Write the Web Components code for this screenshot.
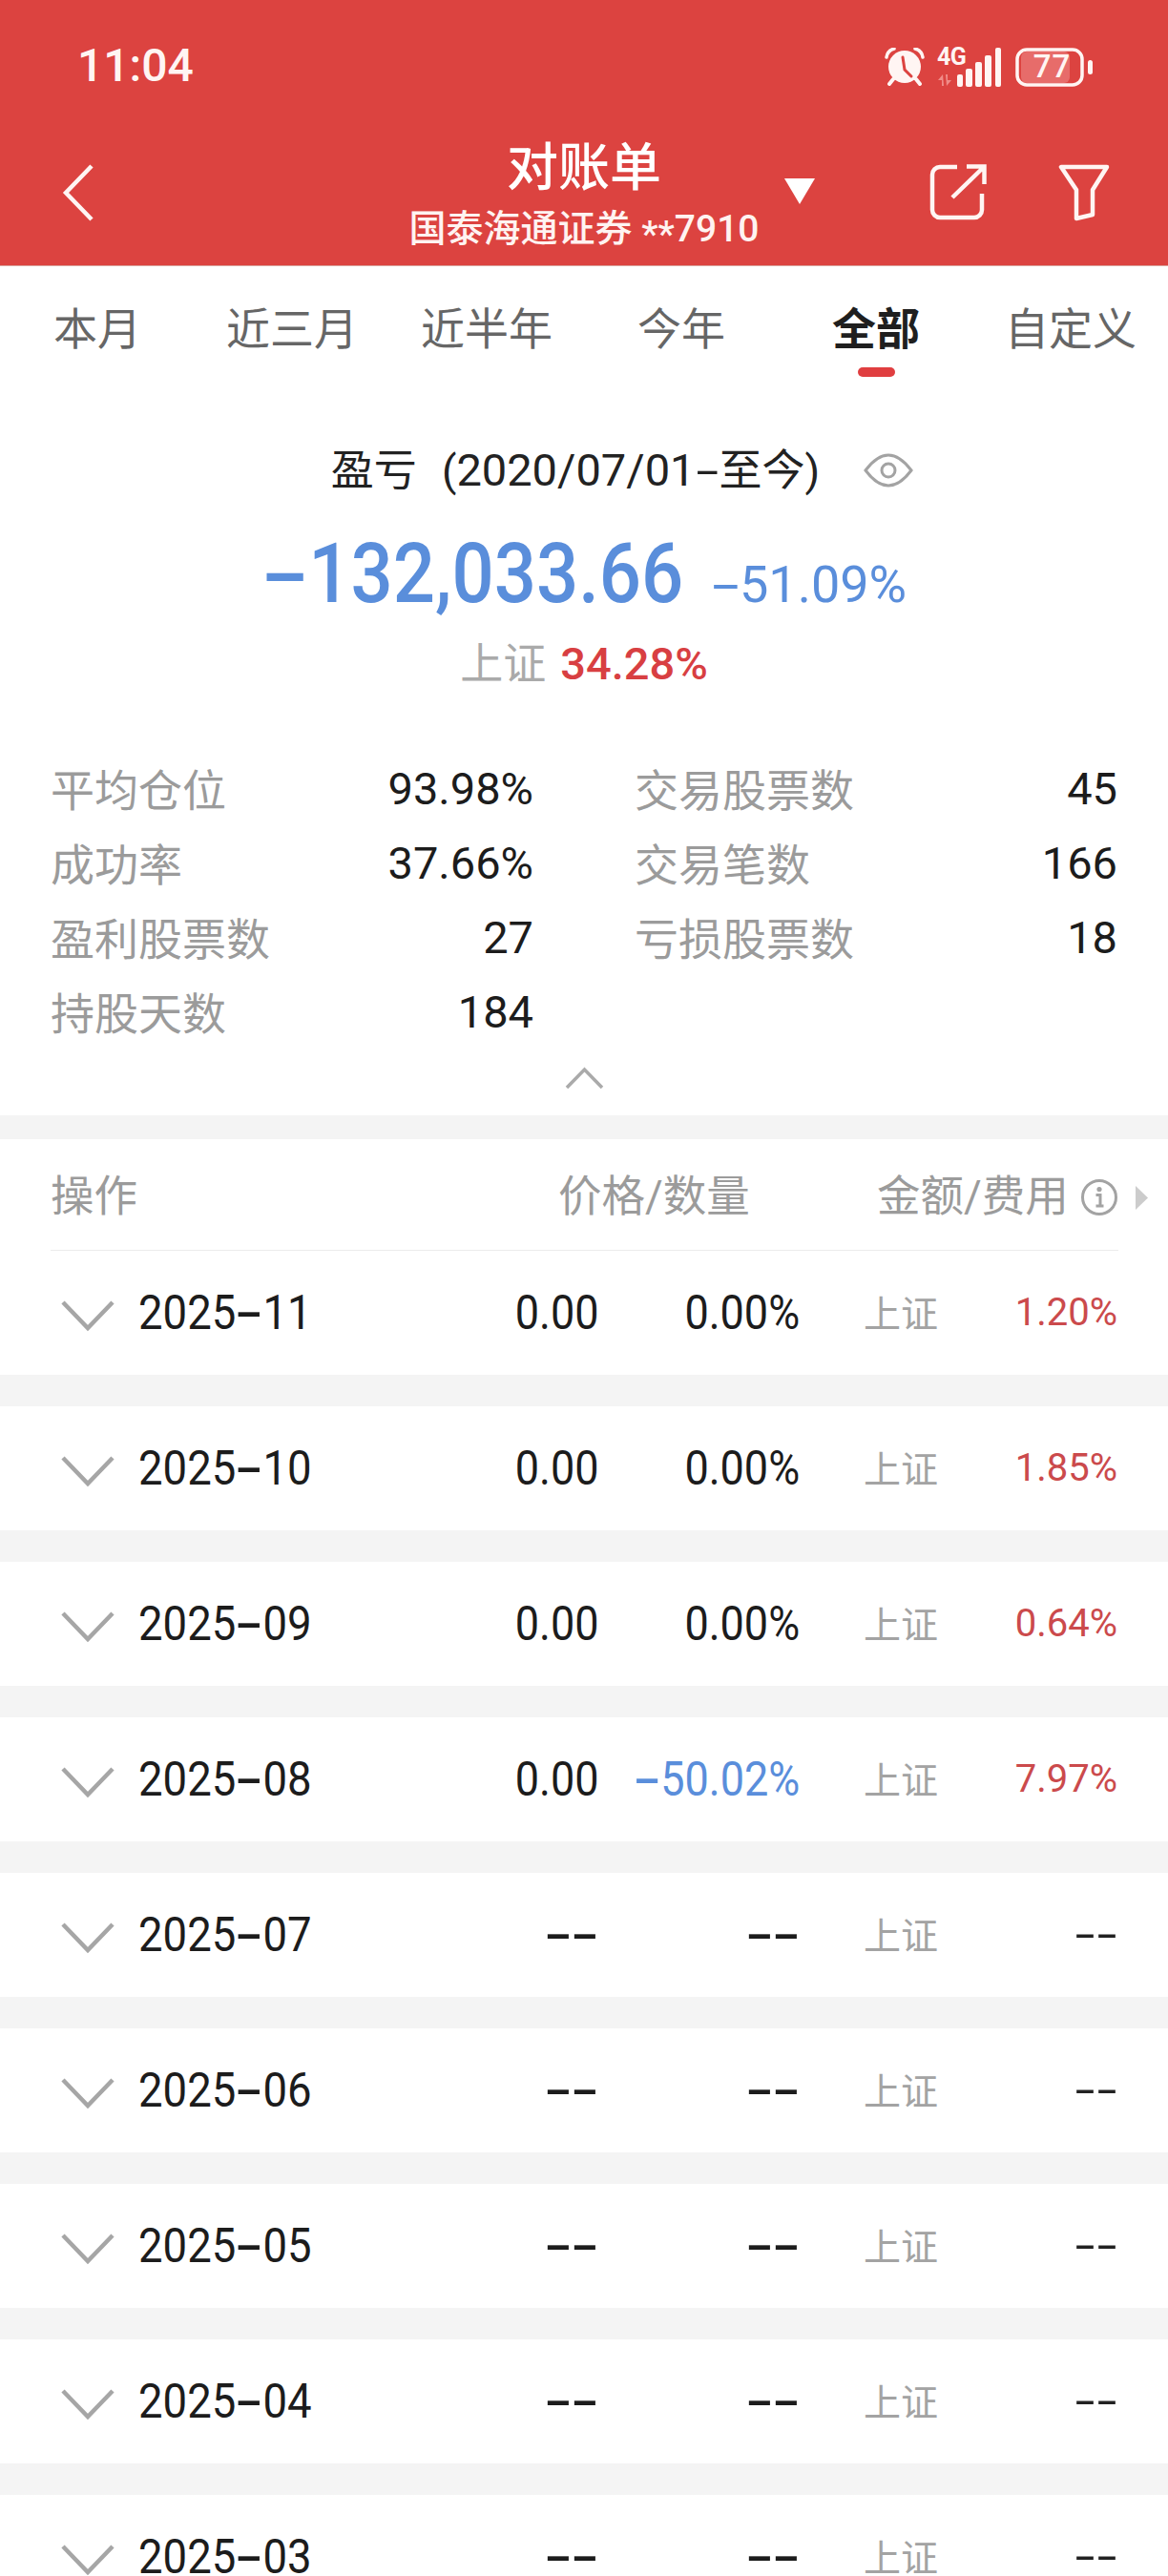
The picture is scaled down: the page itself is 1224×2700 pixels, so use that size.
<!DOCTYPE html>
<html lang="zh-CN">
<head>
<meta charset="utf-8">
<title>对账单</title>
<style>
html,body{margin:0;padding:0;background:#fff}
body{width:1224px;height:2700px;overflow:hidden;font-family:Roboto,"Noto Sans CJK SC",sans-serif;color:#222}
</style>
</head>
<body>
<app-header></app-header>
<period-tabs></period-tabs>
<pnl-summary></pnl-summary>
<stat-grid>
  <stat-item label="平均仓位" value="93.98%"></stat-item>
  <stat-item label="交易股票数" value="45"></stat-item>
  <stat-item label="成功率" value="37.66%"></stat-item>
  <stat-item label="交易笔数" value="166"></stat-item>
  <stat-item label="盈利股票数" value="27"></stat-item>
  <stat-item label="亏损股票数" value="18"></stat-item>
  <stat-item label="持股天数" value="184"></stat-item>
</stat-grid>
<ledger-head></ledger-head>
<month-row month="2025-11" a="0.00" b="0.00%" c="1.20%"></month-row>
<month-row month="2025-10" a="0.00" b="0.00%" c="1.85%"></month-row>
<month-row month="2025-09" a="0.00" b="0.00%" c="0.64%"></month-row>
<month-row month="2025-08" a="0.00" b="-50.02%" c="7.97%" down></month-row>
<month-row month="2025-07" a="--" b="--" c="--"></month-row>
<month-row month="2025-06" a="--" b="--" c="--"></month-row>
<month-row month="2025-05" a="--" b="--" c="--"></month-row>
<month-row month="2025-04" a="--" b="--" c="--"></month-row>
<month-row month="2025-03" a="--" b="--" c="--"></month-row>
<script>
const dash = s => s.replace(/-/g, '<span class="h">-</span>');
const HY = `.h{display:inline-block;transform:scaleX(1.9);margin:0 .14em}`;
class Base extends HTMLElement {
  connectedCallback(){
    if(this.shadowRoot) return;
    this.attachShadow({mode:'open'}).innerHTML = this.render();
  }
}
class AppHeader extends Base { render(){ return `
<style>
:host{display:block;background:#dc4340;color:#fff;height:279px;box-sizing:border-box;border-bottom:1px solid #d9a09a}
.status{height:138px;display:flex;align-items:center;padding:0 78px 0 81px;justify-content:space-between;box-sizing:border-box}
.time{font-size:48px;line-height:54px;font-weight:500;color:#fff5f3}
.sys{display:flex;align-items:flex-start;height:42px;margin-top:4px}
.net{position:relative;width:71px;height:42px;margin-left:13px}
.g4{position:absolute;left:0;top:-3px;font-size:25px;line-height:26px;font-weight:700;letter-spacing:-.5px;color:#fff5f3}
.batt{position:relative;width:82px;height:42px;margin-left:11px}
.batt b{position:absolute;left:6px;top:0;width:65px;height:40px;font-size:33px;line-height:40px;font-weight:500;text-align:center;color:#fff5f3;letter-spacing:1px}
.nav{display:grid;grid-template-columns:1fr 363px 1fr;height:140px}
.left{padding:34px 0 0 65px}
.mid{text-align:center;padding-top:6px}
.t{font-size:54px;line-height:66px;height:63px;font-weight:500}
.s{font-size:39px;line-height:66px;height:66px;white-space:nowrap;color:#fff3f1;font-weight:500;margin:0 -10px}
.s i{font-style:normal;vertical-align:-6px}
.right{display:flex;align-items:flex-start;padding-top:34px}
.tri{margin:15px 0 0 27px}
.share{margin-left:119px}
.filter{margin-left:75px}
svg{display:block}
</style>
<div class="status">
  <span class="time">11:04</span>
  <div class="sys">
    <svg width="42" height="40" viewBox="0 0 42 40">
      <path d="M2 10 Q3 3 10 1 M40 10 Q39 3 32 1" fill="none" stroke="#fff5f3" stroke-width="3.5" stroke-linecap="round"/>
      <path d="M9 33 L5 38 M33 33 L37 38" stroke="#fff5f3" stroke-width="4" stroke-linecap="round"/>
      <circle cx="21" cy="20" r="17" fill="#fff5f3"/>
      <path d="M19 10 L21 23 L28 30" fill="none" stroke="#dc4340" stroke-width="3" stroke-linecap="round"/>
    </svg>
    <div class="net">
      <span class="g4">4G</span>
      <svg width="71" height="42" viewBox="0 0 71 42" style="position:absolute;left:0;top:0">
        <path d="M6 28 L1 34 H5 V40 H7 Z M10 40 L15 34 H11 V28 H9 Z" fill="#f08c88"/>
        <g fill="#fff5f3">
          <rect x="21" y="28" width="6" height="13" rx="2"/>
          <rect x="30" y="22" width="7" height="19" rx="2"/>
          <rect x="40" y="15" width="7" height="26" rx="2"/>
          <rect x="50" y="8" width="7" height="33" rx="2"/>
          <rect x="61" y="0" width="6" height="41" rx="2"/>
        </g>
      </svg>
    </div>
    <div class="batt">
      <svg width="82" height="42" viewBox="0 0 82 42" style="position:absolute;left:0;top:0">
        <rect x="6" y="4" width="51" height="33" rx="6" fill="#e76c6a"/>
        <rect x="2" y="2" width="68" height="37" rx="10" fill="none" stroke="#fff5f3" stroke-width="3.5"/>
        <rect x="76" y="13" width="5" height="15" rx="2.5" fill="#fff5f3"/>
      </svg>
      <b>77</b>
    </div>
  </div>
</div>
<div class="nav">
  <div class="left">
    <svg width="34" height="60" viewBox="0 0 34 60"><path d="M31 2 L4 30 L31 58" fill="none" stroke="#fff5f3" stroke-width="4.5"/></svg>
  </div>
  <div class="mid"><div class="t">对账单</div><div class="s">国泰海通证券 <i>**</i>7910</div></div>
  <div class="right">
    <svg class="tri" width="34" height="27" viewBox="0 0 34 27"><path d="M1 0 H33 L17 27 Z" fill="#fff"/></svg>
    <svg class="share" width="60" height="60" viewBox="0 0 60 60" fill="none" stroke="#fff5f3" stroke-width="4.5">
      <path d="M29 3 H11 a8 8 0 0 0 -8 8 V48 a8 8 0 0 0 8 8 H47 a8 8 0 0 0 8 -8 V31"/>
      <path d="M39 2.5 H57.5 V21 M57 3 L24 35"/>
    </svg>
    <svg class="filter" width="54" height="60" viewBox="0 0 54 60" fill="none" stroke="#fff5f3" stroke-width="4.5" stroke-linejoin="round">
      <path d="M3 3 H51 L36 27 V53 L19 57 V27 Z"/>
    </svg>
  </div>
</div>`; } }
class PeriodTabs extends Base { render(){
  const tabs=['本月','近三月','近半年','今年','全部','自定义'];
  return `
<style>
:host{display:flex;height:121px}
.tab{flex:1;display:flex;flex-direction:column;align-items:center;padding-top:44px;box-sizing:border-box;font-size:46px;line-height:44px;color:#666;white-space:nowrap}
.on{color:#1f1f1f;font-weight:700}
.on i{display:block;width:39px;height:10px;border-radius:5px;background:#e03e40;margin-top:18px}
</style>
${tabs.map((t,i)=>`<div class="tab${i==4?' on':''}"><span>${t}</span>${i==4?'<i></i>':''}</div>`).join('')}`; } }
class PnlSummary extends Base { render(){ return `
<style>
:host{display:block;height:387px;box-sizing:border-box;padding-top:71px;text-align:center}
${HY}
.title{display:flex;justify-content:center;align-items:center;height:44px;font-size:45px;line-height:44px;color:#222;padding-left:80px;white-space:nowrap;word-spacing:15px}
.title svg{margin-left:46px;flex:none}
.title em{font-style:normal;font-size:47px}
.amt{display:flex;justify-content:center;align-items:baseline;height:100px;line-height:100px;margin-top:36px;color:#5a8edb;padding-left:1px}
.amt b{display:inline-block;font-size:87px;font-weight:500;transform:scaleX(.895);transform-origin:0 50%;margin-right:-51px;white-space:nowrap}
.amt span.p{font-size:54px;margin-left:28px;font-weight:400}
.idx{height:48px;line-height:48px;margin-top:21px;font-size:45px;color:#aaa;display:flex;justify-content:center;align-items:baseline}
.idx b{font-size:47px;font-weight:500;color:#d83f42;margin-left:15px}
</style>
<div class="title"><span>盈亏 (<em>2020/07/01</em>${dash('-')}至今)</span>
  <svg width="52" height="38" viewBox="0 0 52 38" fill="none" stroke="#a3a3a3" stroke-width="3"><path d="M2 19 Q14 3 26 3 Q38 3 50 19 Q38 35 26 35 Q14 35 2 19 Z"/><circle cx="26" cy="19" r="7"/></svg>
</div>
<div class="amt"><b>${dash('-')}132,033.66</b><span class="p">${dash('-')}51.09%</span></div>
<div class="idx"><span>上证</span><b>34.28%</b></div>`; } }
class StatGrid extends Base { render(){ return `
<style>
:host{display:block;height:382px;box-sizing:border-box}
.g{display:grid;grid-template-columns:506px 506px;column-gap:106px;padding-left:53px;grid-auto-rows:78px}
.c{display:flex;justify-content:center;padding-top:19px}
svg{display:block}
</style>
<div class="g"><slot></slot></div>
<div class="c"><svg width="41" height="24" viewBox="0 0 41 24"><path d="M2 22 L20.5 3 L39 22" fill="none" stroke="#aaa" stroke-width="3.5"/></svg></div>`; } }
class StatItem extends Base { render(){ return `
<style>
:host{display:flex;justify-content:space-between;align-items:center;height:78px;font-size:46px;color:#9b9b9b;white-space:nowrap}
span{margin-top:-3px}
b{font-weight:400;font-size:47px;color:#1c1c1c}
</style>
<span>${this.getAttribute('label')}</span><b>${this.getAttribute('value')}</b>`; } }
class LedgerHead extends Base { render(){ return `
<style>
:host{display:block;background:#fff;border-top:25px solid #f4f4f4;height:142px;box-sizing:border-box}
.r{display:grid;grid-template-columns:532px 198px 136px 194px 77px 13px;align-items:center;height:116px;padding:6px 0 0 53px;box-sizing:border-box;font-size:45.5px;color:#9b9b9b;white-space:nowrap}
.r span{line-height:44px}
.i{justify-self:center}
svg{display:block}
.l{height:1px;background:#ececec;margin:0 52px 0 53px}
</style>
<div class="r"><span>操作</span><span>价格/数量</span><i></i><span>金额/费用</span>
  <svg class="i" width="40" height="40" viewBox="0 0 40 40"><circle cx="20" cy="20" r="17.5" fill="none" stroke="#a3a3a3" stroke-width="3"/><circle cx="20" cy="11.5" r="2.6" fill="#a3a3a3"/><path d="M16.5 17.5 H21 V28 M16.5 29 H24.5" fill="none" stroke="#a3a3a3" stroke-width="3"/></svg>
  <svg width="13" height="25" viewBox="0 0 13 25"><path d="M0 0 L13 12.5 L0 25 Z" fill="#ccc"/></svg>
</div>
<div class="l"></div>`; } }
class MonthRow extends Base { render(){
  const g=n=>this.getAttribute(n);
  const down=this.hasAttribute('down');
  return `
<style>
:host{display:block;height:163px;box-sizing:border-box;border-bottom:33px solid #f4f4f4;background:#fff}
${HY}
.h{font-weight:500}
.r{display:grid;grid-template-columns:1fr 160px 211px 142px 191px;align-items:center;height:130px;padding:0 53px;font-size:50px;line-height:50px;font-weight:400;color:#1c1c1c;white-space:nowrap}
.m{display:flex;align-items:center}
.m svg{display:block;margin:7px 0 0 11px;flex:none}
.m .d{display:inline-block;margin-left:25px;transform:scaleX(.91);transform-origin:0 50%}
.n{text-align:right}
.n span.v{display:inline-block;transform:scaleX(.9);transform-origin:100% 50%}
.b{color:#5a8edb}
.x{padding-left:67px;font-size:39px;color:#a3a3a3;margin-top:4px}
.c{text-align:right;font-size:40px;color:#cb4a4c}
.c .h{color:#222;font-size:36px}
</style>
<div class="r">
  <div class="m"><svg width="56" height="33" viewBox="0 0 56 33"><path d="M2 2 L28 29 L54 2" fill="none" stroke="#a6a6a6" stroke-width="4.5"/></svg><span class="d">${dash(g('month'))}</span></div>
  <div class="n"><span class="v">${dash(g('a'))}</span></div>
  <div class="n${down?' b':''}"><span class="v">${dash(g('b'))}</span></div>
  <div class="x">上证</div>
  <div class="c">${dash(g('c'))}</div>
</div>`; } }
customElements.define('app-header',AppHeader);
customElements.define('period-tabs',PeriodTabs);
customElements.define('pnl-summary',PnlSummary);
customElements.define('stat-grid',StatGrid);
customElements.define('stat-item',StatItem);
customElements.define('ledger-head',LedgerHead);
customElements.define('month-row',MonthRow);
</script>
</body>
</html>
